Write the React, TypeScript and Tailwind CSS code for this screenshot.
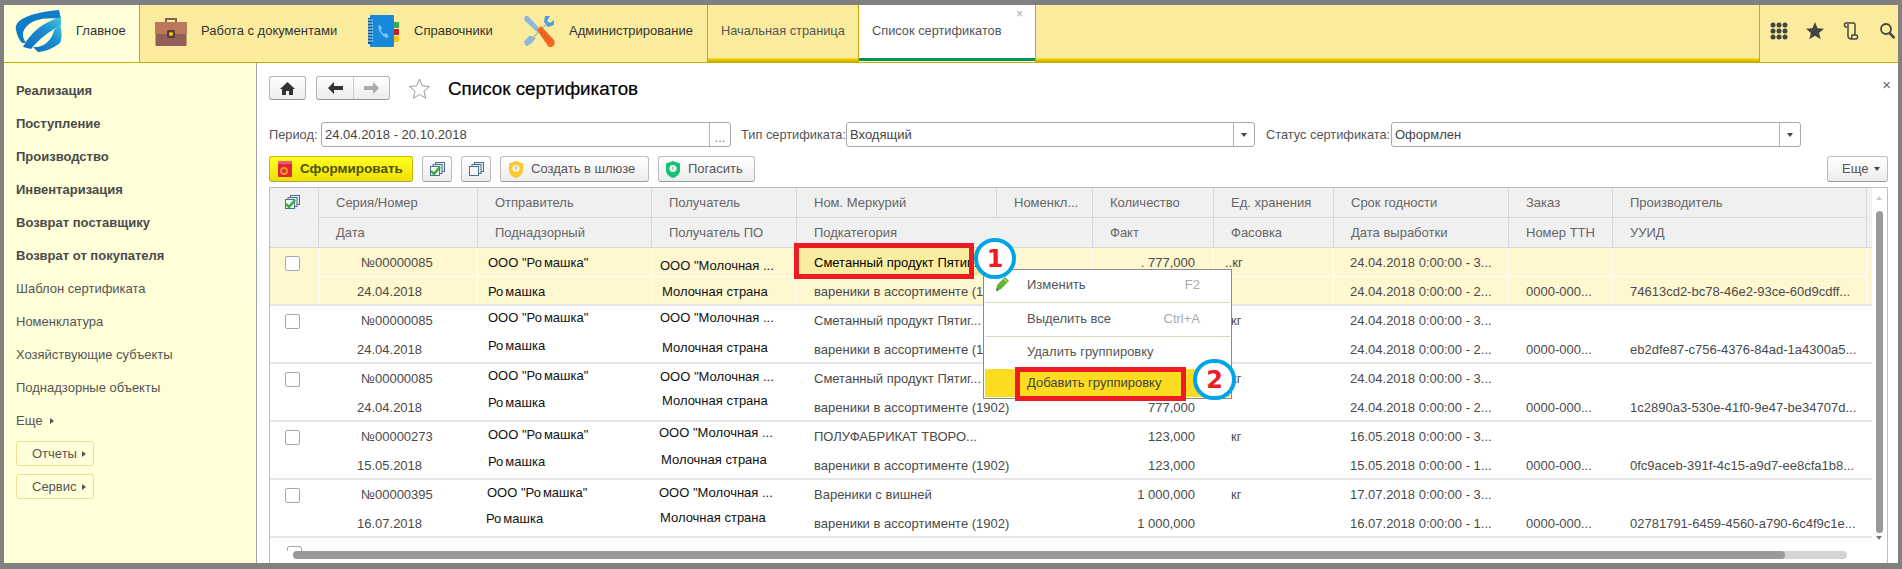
import { ReactNode } from 'react';

const Logo = () => (
  <svg width="48" height="42" viewBox="0 0 48 42">
    <defs>
      <linearGradient id="lg" x1="0" y1="1" x2="1" y2="0">
        <stop offset="0" stopColor="#0f6fc0" />
        <stop offset="0.6" stopColor="#1a8fd0" />
        <stop offset="1" stopColor="#45c6d8" />
      </linearGradient>
    </defs>
    <path d="M2 20C0 10 14 3 45 0l2 9C32 7 16 9 10 20c-2 4-1 8 2 13H8C5 30 3 25 2 20z" fill="#0f7cc8" />
    <path d="M9 37C17 21 32 11 47 7v8C36 21 25 29 17 39z" fill="url(#lg)" />
    <path d="M19 37c11 1 19-7 21-17l6-6c3 10 1 18 0 19-6 5-16 9-22 9z" fill="url(#lg)" />
  </svg>
);

const Briefcase = () => (
  <svg width="32" height="30" viewBox="0 0 32 30">
    <path d="M10 6V2h12v4h-2V4h-8v2z" fill="#8f5f55" />
    <rect x="0" y="6" width="32" height="12" fill="#b9795a" />
    <rect x="0.5" y="18" width="31" height="12" fill="#915f58" />
    <rect x="12" y="14" width="8" height="8" rx="1.5" fill="#5d3c38" />
    <circle cx="16" cy="18" r="2" fill="#f5c518" />
  </svg>
);

const PhoneBook = () => (
  <svg width="32" height="32" viewBox="0 0 32 32">
    <rect x="2" y="0" width="24" height="32" rx="1" fill="#1689dc" />
    <rect x="0" y="3" width="4" height="26" fill="#0d5d9c" />
    <path d="M0 5h5M0 8h5M0 11h5M0 14h5M0 17h5M0 20h5M0 23h5M0 26h5" stroke="#cfe6f7" strokeWidth="1" />
    <rect x="26" y="7" width="5" height="6" fill="#2fb34a" />
    <rect x="26" y="14" width="5" height="6" fill="#c8202c" />
    <rect x="26" y="21" width="5" height="6" fill="#f2c418" />
    <path d="M11 10c-1 1-1 4 1 7s5 6 7 6l2-2-3-3-2 1c-2-1-3-3-3-4l1-2-2-3z" fill="#7cc4f0" />
  </svg>
);

const Tools = () => (
  <svg width="32" height="32" viewBox="0 0 32 32">
    <path d="M2 1l3 0 12 13-3 3L1 5z" fill="#8fb8df" />
    <path d="M22 1l-1 6 2 2-13 13-3-1-6 6 3 4 6-5 0-3 13-13 2 2 6-2 0-5-4 3-3-2 3-5z" fill="#4f9de0" />
    <path d="M6 21l-5 6 2 4 5-2 5-6z" fill="#8fb8df" />
    <path d="M14 15l4-4 13 14c1 2 1 4-1 6s-4 1-5 0z" fill="#f26722" />
    <path d="M18 17l9 10" stroke="#c8470f" strokeWidth="1" strokeDasharray="2 2" />
  </svg>
);

const HomeIcon = () => (
  <svg width="15" height="13" viewBox="0 0 15 13">
    <path d="M7.5 0L15 7h-2v6H9V9H6v4H2V7H0z" fill="#333" />
  </svg>
);

const ArrowIcon = ({ color, flip }: { color: string; flip?: boolean }) => (
  <svg width="15" height="12" viewBox="0 0 15 12" className={flip ? 'rotate-180' : ''}>
    <path d="M0 6l6-6v4h9v4H6v4z" fill={color} />
  </svg>
);

const StarOutline = () => (
  <svg width="23" height="21" viewBox="0 0 23 21">
    <path d="M11.5 1l2.8 6.9 7.2.6-5.5 4.7 1.7 7.1-6.2-3.8-6.2 3.8 1.7-7.1L1.5 8.5l7.2-.6z" fill="#fff" stroke="#9a9a9a" />
  </svg>
);

const Stack = ({ check }: { check?: boolean }) => (
  <svg width="15" height="14" viewBox="0 0 15 14">
    <rect x="5.5" y="0.5" width="9" height="9" fill="#dce6f0" stroke="#4f6f8f" />
    <rect x="3" y="2.5" width="9" height="9" fill="#e4edf5" stroke="#4f6f8f" />
    <rect x="0.5" y="4.5" width="9" height="9" fill="#f2f6fa" stroke="#4f6f8f" />
    {check && <path d="M1 9l3 3 6-7" fill="none" stroke="#2fae36" strokeWidth="2.4" />}
  </svg>
);

const Shield = ({ fill, inner }: { fill: string; inner: string }) => (
  <svg width="14" height="17" viewBox="0 0 14 17">
    <path d="M7 0l7 2.5V9c0 4-3 6.500-7 8-4-1.500-7-4-7-8V2.500z" fill={fill} />
    <circle cx="7" cy="7.500" r="3.600" fill={inner} />
    <path d="M7 5.500v3" stroke="#999" strokeWidth="1" />
  </svg>
);

const Caret = ({ right }: { right?: boolean }) =>
  right ? (
    <span className="inline-block w-0 h-0 border-y-[3px] border-y-transparent border-l-[4px] border-l-[#555]" />
  ) : (
    <span className="inline-block w-0 h-0 border-x-[3px] border-x-transparent border-t-[4px] border-t-[#444]" />
  );

// подпись с зазором как на скриншоте
const Romashka = () => (
  <>
    Ро<span className="ml-[2px]">машка</span>
  </>
);

const menuItems = ['Реализация', 'Поступление', 'Производство', 'Инвентаризация', 'Возврат поставщику', 'Возврат от покупателя'];
const subItems = ['Шаблон сертификата', 'Номенклатура', 'Хозяйствующие субъекты', 'Поднадзорные объекты'];

const Sidebar = () => (
  <aside className="w-[253px] shrink-0 bg-[#FFFFD9] border-r border-[#a3a3a3] pt-[11px] pl-[12px]">
    {menuItems.map((item) => (
      <div key={item} className="h-[33px] flex items-center font-bold text-[13px] text-[#4a4a4a]">
        {item}
      </div>
    ))}
    {subItems.map((item) => (
      <div key={item} className="h-[33px] flex items-center text-[13px] text-[#555]">
        {item}
      </div>
    ))}
    <div className="h-[33px] flex items-center gap-[8px] text-[13px] text-[#555]">
      Еще <Caret right />
    </div>
    <div className="mt-[4px] flex flex-col gap-[8px]">
      {['Отчеты', 'Сервис'].map((b) => (
        <div key={b} className="w-[78px] h-[25px] rounded-[3px] border border-[#EFE08F] flex items-center pl-[15px] gap-[5px] text-[13px] text-[#555]">
          {b} <Caret right />
        </div>
      ))}
    </div>
  </aside>
);

const TopBar = () => (
  <header className="h-[58px] shrink-0 flex border-b border-[#C8A900] bg-[#FBEC9D] text-[13px]">
    <div className="w-[136px] shrink-0 bg-[#FFFFD9] border-r border-[#C8A900] flex items-center pl-[10px] pb-[5px] gap-[14px] text-[#333]">
      <Logo />
      Главное
    </div>
    <div className="w-[568px] shrink-0 flex items-center pl-[15px] pb-[5px] text-[#333] border-r border-[#C8A900]">
      <div className="w-[213px] flex items-center gap-[14px]">
        <Briefcase />
        Работа с документами
      </div>
      <div className="w-[155px] flex items-center gap-[14px]">
        <PhoneBook />
        Справочники
      </div>
      <div className="flex items-center gap-[14px]">
        <Tools />
        Администрирование
      </div>
    </div>
    <div className="w-[151px] shrink-0 flex flex-col border-r border-[#C8A900]">
      <div className="flex-1 flex items-center pl-[13px] pb-[2px] text-[12.800px] text-[#555]">Начальная страница</div>
      <div className="h-[4px] bg-linear-to-b from-[#FFE01E] to-[#C8A900]" />
    </div>
    <div className="relative w-[177px] shrink-0 flex flex-col bg-white border-r border-[#C8A900]">
      <div className="flex-1 flex items-center pl-[13px] pb-[2px] text-[12.800px] text-[#555]">Список сертификатов</div>
      <span className="absolute right-[12px] top-[3px] text-[12px] leading-none text-[#aaa]">×</span>
      <div className="h-[3px] mb-px bg-[#009646]" />
    </div>
    <div className="flex-1 flex flex-col">
      <div className="flex-1" />
      <div className="h-[4px] bg-linear-to-b from-[#FFE01E] to-[#C8A900]" />
    </div>
    <div className="w-[139px] shrink-0 border-l border-[#C8A900] flex items-center pl-[10px] pb-[5px] text-[#444]">
      <svg width="18" height="18" viewBox="0 0 18 18" fill="#444">
        {[3, 9, 15].map((cy) => [3, 9, 15].map((cx) => <circle key={`${cx}-${cy}`} cx={cx} cy={cy} r="2.5" />))}
      </svg>
      <svg width="18" height="18" viewBox="0 0 18 18" fill="#444" className="ml-[18px]">
        <path d="M9 0l2.600 6.200 6.400.5-4.900 4.200 1.500 6.300L9 13.800 3.400 17.200l1.500-6.300L0 6.700l6.400-.5z" />
      </svg>
      <svg width="16" height="18" viewBox="0 0 16 18" fill="none" stroke="#444" strokeWidth="1.500" className="ml-[19px]">
        <path d="M3 1h7c1 0 2 1 2 2v10M3 1C1 1 1 5 3 5h1M5 2v12c0 2 2 3 4 3h4c2 0 2-4 0-4H9c0 2 0 4-2 4" />
      </svg>
      <svg width="15" height="16" viewBox="0 0 15 16" fill="none" stroke="#444" strokeWidth="1.800" className="ml-[21px]">
        <circle cx="6" cy="6" r="5" />
        <path d="M9.500 10l5 5" strokeWidth="2.500" />
      </svg>
    </div>
  </header>
);

const Field = ({ label, labelW, w, value, dots }: { label: string; labelW: string; w: string; value: string; dots?: boolean }) => (
  <>
    <span className={`${labelW} shrink-0 whitespace-nowrap text-[#555] text-[12.800px]`}>{label}</span>
    <div className={`${w} shrink-0 h-[25px] rounded-[3px] border border-[#a8a8a8] flex items-center bg-white text-[13px] text-[#444]`}>
      <span className="flex-1 pl-[3px]">{value}</span>
      <span className="w-[21px] h-full border-l border-[#b5b5b5] flex items-center justify-center text-[#777]">
        {dots ? <span className="pt-[6px]">...</span> : <Caret />}
      </span>
    </div>
  </>
);

const Btn = ({ className, children }: { className: string; children: ReactNode }) => (
  <div className={`h-[26px] shrink-0 rounded-[3px] border border-[#bdbdbd] border-b-[#999] bg-linear-to-b from-white to-[#ececec] flex items-center text-[13px] text-[#555] ${className}`}>
    {children}
  </div>
);

const gridCols = 'grid grid-cols-[49px_159px_174px_145px_200px_96px_121px_120px_175px_104px_254px_5px]';

const hCell = 'flex items-center pl-[17px] border-r border-b border-[#d8d8d8] overflow-hidden whitespace-nowrap';

const TableHead = () => (
  <div className={`${gridCols} grid-rows-[30px_30px] bg-[#F0F0F0] text-[13px] text-[#666]`}>
    <div className="row-span-2 flex justify-center pt-[7px] pr-[3px] border-r border-b border-[#d8d8d8]">
      <Stack check />
    </div>
    <div className={hCell}>Серия/Номер</div>
    <div className={hCell}>Отправитель</div>
    <div className={hCell}>Получатель</div>
    <div className={hCell}>Ном. Меркурий</div>
    <div className={hCell}>Номенкл...</div>
    <div className={hCell}>Количество</div>
    <div className={hCell}>Ед. хранения</div>
    <div className={hCell}>Срок годности</div>
    <div className={hCell}>Заказ</div>
    <div className={hCell}>Производитель</div>
    <div className="row-span-2 border-b border-[#d8d8d8]" />
    <div className={hCell}>Дата</div>
    <div className={hCell}>Поднадзорный</div>
    <div className={hCell}>Получатель ПО</div>
    <div className={`${hCell} col-span-2`}>Подкатегория</div>
    <div className={hCell}>Факт</div>
    <div className={hCell}>Фасовка</div>
    <div className={hCell}>Дата выработки</div>
    <div className={hCell}>Номер ТТН</div>
    <div className={hCell}>УУИД</div>
  </div>
);

interface RowData {
  no: string;
  date: string;
  senderCls: string;
  firmCls: string;
  buyerCls: string;
  countryCls: string;
  nom: string;
  qty: string;
  term1: string;
  term2: string;
  uuid: string;
  active?: boolean;
}

const rows: RowData[] = [
  {
    no: '№00000085', date: '24.04.2018',
    senderCls: 'pl-[10px] pt-[1px]', firmCls: 'pl-[10px] pt-[2px]', buyerCls: 'pl-[8px] pt-[8px]', countryCls: 'pl-[10px] pt-[2px]',
    nom: 'Сметанный продукт Пятиг...', qty: '777,000',
    term1: '24.04.2018 0:00:00 - 3...', term2: '24.04.2018 0:00:00 - 2...',
    uuid: '74613cd2-bc78-46e2-93ce-60d9cdff...', active: true,
  },
  {
    no: '№00000085', date: '24.04.2018',
    senderCls: 'pl-[10px] pb-[4px]', firmCls: 'pl-[10px] pb-[5px]', buyerCls: 'pl-[8px] pb-[4px]', countryCls: 'pl-[10px] pb-[1px]',
    nom: 'Сметанный продукт Пятиг...', qty: '777,000',
    term1: '24.04.2018 0:00:00 - 3...', term2: '24.04.2018 0:00:00 - 2...',
    uuid: 'eb2dfe87-c756-4376-84ad-1a4300a5...',
  },
  {
    no: '№00000085', date: '24.04.2018',
    senderCls: 'pl-[10px] pb-[4px]', firmCls: 'pl-[10px] pb-[7px]', buyerCls: 'pl-[8px] pb-[2px]', countryCls: 'pl-[10px] pb-[11px]',
    nom: 'Сметанный продукт Пятиг...', qty: '777,000',
    term1: '24.04.2018 0:00:00 - 3...', term2: '24.04.2018 0:00:00 - 2...',
    uuid: '1c2890a3-530e-41f0-9e47-be34707d...',
  },
  {
    no: '№00000273', date: '15.05.2018',
    senderCls: 'pl-[10px] pb-[2px]', firmCls: 'pl-[10px] pb-[5px]', buyerCls: 'pl-[7px] pb-[6px]', countryCls: 'pl-[9px] pb-[9px]',
    nom: 'ПОЛУФАБРИКАТ ТВОРО...', qty: '123,000',
    term1: '16.05.2018 0:00:00 - 3...', term2: '15.05.2018 0:00:00 - 1...',
    uuid: '0fc9aceb-391f-4c15-a9d7-ee8cfa1b8...',
  },
  {
    no: '№00000395', date: '16.07.2018',
    senderCls: 'pl-[9px] pb-[2px]', firmCls: 'pl-[8px] pb-[7px]', buyerCls: 'pl-[7px] pb-[2px]', countryCls: 'pl-[8px] pb-[9px]',
    nom: 'Вареники с вишней', qty: '1 000,000',
    term1: '17.07.2018 0:00:00 - 3...', term2: '16.07.2018 0:00:00 - 1...',
    uuid: '02781791-6459-4560-a790-6c4f9c1e...',
  },
];

const Checkbox = () => <span className="block w-[15px] h-[15px] rounded-[2px] border border-[#a8a8a8] bg-white" />;

const cell1 = 'flex items-center overflow-hidden whitespace-nowrap border-r border-b border-white';
const cell2 = 'flex items-center overflow-hidden whitespace-nowrap border-r border-white';

const Row = ({ row }: { row: RowData }) => (
  <div className={`h-[58px] flex flex-col text-[13px] text-[#4a4a4a] ${row.active ? 'bg-[#FEF7D0]' : 'bg-white'}`}>
    <div className={`${gridCols} grid-rows-[29px_27px]`}>
      <div className="row-span-2 flex justify-center pt-[8px] pr-[3px] border-r border-white">
        <Checkbox />
      </div>
      <div className={`${cell1} pt-[2px] pl-[42px]`}>{row.no}</div>
      <div className={`${cell1} text-[#111] ${row.senderCls}`}>
        ООО "<Romashka />"
      </div>
      <div className={`${cell1} text-[#111] ${row.buyerCls}`}>ООО "Молочная ...</div>
      <div className={`${cell1} pt-[2px] pl-[17px] ${row.active ? 'bg-[#FBEDA0] text-black' : ''}`}>{row.nom}</div>
      <div className={cell1} />
      <div className={`${cell1} pt-[2px] justify-end pr-[18px]`}>{row.active ? `. ${row.qty}` : row.qty}</div>
      <div className={`${cell1} pt-[2px] ${row.active ? 'pl-[11px]' : 'pl-[17px]'}`}>{row.active ? '..кг' : 'кг'}</div>
      <div className={`${cell1} pt-[2px] pl-[16px]`}>{row.term1}</div>
      <div className={cell1} />
      <div className={cell1} />
      <div className="row-span-2" />
      <div className={`${cell2} pt-[3px] pl-[38px]`}>{row.date}</div>
      <div className={`${cell2} text-[#111] ${row.firmCls}`}>
        <Romashka />
      </div>
      <div className={`${cell2} text-[#111] ${row.countryCls}`}>Молочная страна</div>
      <div className={`${cell2} pt-[3px] col-span-2 pl-[17px]`}>вареники в ассортименте (1902)</div>
      <div className={`${cell2} pt-[3px] justify-end pr-[18px]`}>{row.qty}</div>
      <div className={cell2} />
      <div className={`${cell2} pt-[3px] pl-[16px]`}>{row.term2}</div>
      <div className={`${cell2} pt-[3px] pl-[17px]`}>0000-000...</div>
      <div className={`${cell2} pt-[3px] pl-[17px]`}>{row.uuid}</div>
    </div>
    <div className="h-[2px] bg-[#e6e6e6]" />
  </div>
);

const PopupItem = ({ text, hotkey, className }: { text: string; hotkey?: string; className: string }) => (
  <div className={`flex-1 flex items-center justify-between pl-[42px] pr-[30px] text-[13px] text-[#555] ${className}`}>
    <span>{text}</span>
    <span className="text-[#aaa]">{hotkey}</span>
  </div>
);

const Badge = ({ n, className }: { n: string; className: string }) => (
  <div className={`absolute z-30 h-[41px] rounded-full border-[4px] border-[#00A2E8] bg-white flex items-center justify-center text-[#ED1C24] text-[24px] font-bold font-['DejaVu_Sans',sans-serif] ${className}`}>
    {n}
  </div>
);

export default function App() {
  return (
    <div className="w-[1902px] h-[569px] overflow-hidden bg-[#808080] pt-[5px] px-[4px] pb-[6px] flex flex-col font-['Liberation_Sans',Arial,sans-serif]">
      <TopBar />
      <div className="flex-1 flex min-h-0">
        <Sidebar />
        <main className="relative flex-1 bg-white pt-[13px] pl-[12px] pr-[10px] flex flex-col">
          <span className="absolute right-[7px] top-[14px] text-[15px] leading-none text-[#666]">×</span>

          <div className="h-[24px] flex items-center">
            <div className="w-[37px] h-[24px] rounded-[3px] border border-[#b5b5b5] border-b-[#999] bg-linear-to-b from-white to-[#ececec] flex items-center justify-center">
              <HomeIcon />
            </div>
            <div className="ml-[10px] w-[74px] h-[24px] rounded-[3px] border border-[#b5b5b5] border-b-[#999] bg-linear-to-b from-white to-[#ececec] flex items-center">
              <span className="w-[37px] h-full border-r border-[#ccc] flex items-center justify-center">
                <ArrowIcon color="#333" />
              </span>
              <span className="flex-1 flex items-center justify-center">
                <ArrowIcon color="#aaa" flip />
              </span>
            </div>
            <span className="ml-[18px]">
              <StarOutline />
            </span>
            <h1 className="ml-[17px] pt-[3px] text-[18.800px] text-black font-medium [-webkit-text-stroke:0.2px_#000]">Список сертификатов</h1>
          </div>

          <div className="mt-[22px] h-[25px] flex items-center">
            <Field label="Период:" labelW="w-[52px]" w="w-[410px]" value="24.04.2018 - 20.10.2018" dots />
            <span className="w-[10px] shrink-0" />
            <Field label="Тип сертификата:" labelW="w-[105px]" w="w-[409px]" value="Входящий" />
            <span className="w-[11px] shrink-0" />
            <Field label="Статус сертификата:" labelW="w-[125px]" w="w-[410px]" value="Оформлен" />
          </div>

          <div className="mt-[9px] h-[26px] flex items-center">
            <div className="w-[144px] h-[26px] rounded-[3px] border border-[#c9b800] border-b-[#a8a060] bg-linear-to-b from-[#FFFF20] to-[#EFE000] flex items-center pl-[8px] gap-[8px] text-[13.500px] font-bold text-[#4f4f00]">
              <svg width="14" height="16" viewBox="0 0 14 16">
                <rect width="14" height="16" rx="1" fill="#e0263a" />
                <rect width="14" height="3" fill="#f05a6a" />
                <circle cx="6" cy="10" r="3" fill="none" stroke="#f7941d" strokeWidth="2" />
              </svg>
              Сформировать
            </div>
            <Btn className="ml-[9px] w-[30px] justify-center">
              <Stack check />
            </Btn>
            <Btn className="ml-[9px] w-[30px] justify-center">
              <Stack />
            </Btn>
            <Btn className="ml-[9px] w-[149px] pl-[8px] gap-[8px]">
              <Shield fill="#f8c830" inner="#f7f1d8" />
              Создать в шлюзе
            </Btn>
            <Btn className="ml-[9px] w-[97px] pl-[7px] gap-[8px]">
              <Shield fill="#17c172" inner="#e8f5ee" />
              Погасить
            </Btn>
            <Btn className="ml-auto w-[61px] pl-[14px] gap-[6px]">
              Еще <Caret />
            </Btn>
          </div>

          <div className="mt-[5px] flex-1 min-h-0 flex border-t border-x border-[#bfbfbf]">
            <div className="w-[1602px] shrink-0 flex flex-col">
              <TableHead />
              <div className="flex flex-col">
                {rows.map((r, i) => (
                  <Row key={i} row={r} />
                ))}
              </div>
              <div className="h-[13px] pt-[8px] pl-[17px] overflow-hidden">
                <Checkbox />
              </div>
              <div className="h-[8px] ml-[23px] w-[1554px] rounded-full bg-[#d4d4d4]">
                <div className="h-full w-[1492px] rounded-full bg-[#9a9a9a]" />
              </div>
            </div>
            <div className="flex-1 flex flex-col items-center pt-[8px] pr-[1px]">
              <span className="w-0 h-0 border-x-[3px] border-x-transparent border-b-[4px] border-b-[#ccc]" />
              <div className="mt-[11px] w-[7px] h-[322px] rounded-full bg-[#9a9a9a]" />
              <span className="mt-[3px] w-0 h-0 border-x-[3px] border-x-transparent border-t-[4px] border-t-[#777]" />
            </div>
          </div>

          {/* всплывающее меню поверх таблицы */}
          <div className="absolute z-10 left-[726px] top-[206px] w-[249px] h-[130px] bg-white border border-[#8a8a8a] flex flex-col p-px">
            <div className="h-[31px] flex relative">
              <svg width="14" height="14" viewBox="0 0 14 14" className="absolute left-[10px] top-[6px]">
                <path d="M10 0l4 4-8 8-5 2 1-6z" fill="#62b52f" />
                <path d="M1 14l1-3 2 2z" fill="#555" />
                <path d="M9 2l3 3" stroke="#d9f0c5" />
              </svg>
              <PopupItem text="Изменить" hotkey="F2" className="pb-[3px]" />
            </div>
            <div className="h-px bg-[#d9d6c4]" />
            <div className="h-[33px] flex">
              <PopupItem text="Выделить все" hotkey="Ctrl+A" className="pb-[2px]" />
            </div>
            <div className="h-px bg-[#d9d6c4]" />
            <div className="h-[32px] flex">
              <PopupItem text="Удалить группировку" className="pb-[2px]" />
            </div>
            <div className="flex-1 flex bg-[#FDDB1E]">
              <div className="flex-1 flex items-center pl-[42px] text-[13px] text-[#444]">Добавить группировку</div>
            </div>
          </div>

          <div className="absolute z-20 left-[537px] top-[180px] w-[180px] h-[36px] border-[5px] border-[#ED1C24]" />
          <div className="absolute z-20 left-[758px] top-[304px] w-[171px] h-[34px] border-[5px] border-[#ED1C24]" />
          <Badge n="1" className="left-[717px] top-[175px] w-[42px]" />
          <Badge n="2" className="left-[936px] top-[296px] w-[43px]" />
        </main>
      </div>
    </div>
  );
}
